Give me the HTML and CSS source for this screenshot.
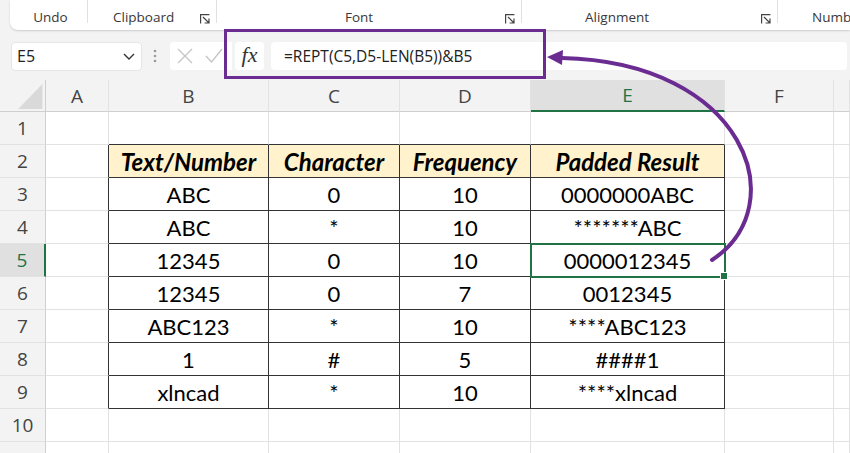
FILE: index.html
```html
<!DOCTYPE html>
<html>
<head>
<meta charset="utf-8">
<link rel="stylesheet" href="styles.css">
</head>
<body>
<div class="app">
  <div class="ribbon">
    <div class="grp g-undo"><span class="lbl">Undo</span></div>
    <div class="grp g-clip"><span class="lbl">Clipboard</span><svg class="launch" viewBox="0 0 10 10"><path d="M0.6 9.4V0.6H9.4M3 3L9 9M9 4.6V9H4.6"/></svg></div>
    <div class="grp g-font"><span class="lbl">Font</span><svg class="launch" viewBox="0 0 10 10"><path d="M0.6 9.4V0.6H9.4M3 3L9 9M9 4.6V9H4.6"/></svg></div>
    <div class="grp g-align"><span class="lbl">Alignment</span><svg class="launch" viewBox="0 0 10 10"><path d="M0.6 9.4V0.6H9.4M3 3L9 9M9 4.6V9H4.6"/></svg></div>
    <div class="grp g-num"><span class="lbl">Number</span></div>
  </div>

  <div class="fbar">
    <div class="namebox"><span>E5</span><svg class="chev" viewBox="0 0 12 7"><path d="M1 1L6 6L11 1"/></svg></div>
    <svg class="dots" viewBox="0 0 4 14"><circle cx="2" cy="2" r="1.3"/><circle cx="2" cy="7" r="1.3"/><circle cx="2" cy="12" r="1.3"/></svg>
    <div class="btnbox">
      <svg class="ico" viewBox="0 0 16 16"><path d="M1 1L15 15M15 1L1 15"/></svg>
      <svg class="ico" viewBox="0 0 18 16"><path d="M1 8L6.5 14L17 1"/></svg>
    </div>
    <div class="fxbox"><span class="fx">fx</span></div>
    <div class="formula">=REPT(C5,D5-LEN(B5))&amp;B5</div>
  </div>

  <div class="sheet">
    <div class="corner"><svg viewBox="0 0 46 32"><path d="M43 4V30H18Z"/></svg></div>
    <div class="ch">A</div><div class="ch">B</div><div class="ch">C</div><div class="ch">D</div><div class="ch ch-sel">E</div><div class="ch">F</div><div class="ch"></div>

    <div class="rh">1</div><div class="c"></div><div class="c tt"></div><div class="c tt"></div><div class="c tt"></div><div class="c tt"></div><div class="c"></div><div class="c"></div>

    <div class="rh">2</div><div class="c tl"></div><div class="c t h">Text/Number</div><div class="c t h">Character</div><div class="c t h">Frequency</div><div class="c t h">Padded Result</div><div class="c"></div><div class="c"></div>

    <div class="rh">3</div><div class="c tl"></div><div class="c t">ABC</div><div class="c t">0</div><div class="c t">10</div><div class="c t">0000000ABC</div><div class="c"></div><div class="c"></div>

    <div class="rh">4</div><div class="c tl"></div><div class="c t">ABC</div><div class="c t">*</div><div class="c t">10</div><div class="c t">*******ABC</div><div class="c"></div><div class="c"></div>

    <div class="rh rh-sel">5</div><div class="c tl"></div><div class="c t">12345</div><div class="c t">0</div><div class="c t">10</div><div class="c t sel">0000012345</div><div class="c"></div><div class="c"></div>

    <div class="rh">6</div><div class="c tl"></div><div class="c t">12345</div><div class="c t">0</div><div class="c t">7</div><div class="c t">0012345</div><div class="c"></div><div class="c"></div>

    <div class="rh">7</div><div class="c tl"></div><div class="c t">ABC123</div><div class="c t">*</div><div class="c t">10</div><div class="c t">****ABC123</div><div class="c"></div><div class="c"></div>

    <div class="rh">8</div><div class="c tl"></div><div class="c t">1</div><div class="c t">#</div><div class="c t">5</div><div class="c t">####1</div><div class="c"></div><div class="c"></div>

    <div class="rh">9</div><div class="c tl"></div><div class="c t">xlncad</div><div class="c t">*</div><div class="c t">10</div><div class="c t">****xlncad</div><div class="c"></div><div class="c"></div>

    <div class="rh">10</div><div class="c"></div><div class="c"></div><div class="c"></div><div class="c"></div><div class="c"></div><div class="c"></div><div class="c"></div>

    <div class="rh"></div><div class="c"></div><div class="c"></div><div class="c"></div><div class="c"></div><div class="c"></div><div class="c"></div><div class="c"></div>
  </div>

  <svg class="overlay" viewBox="0 0 850 453">
    <rect class="hl" x="225.5" y="30.5" width="319" height="47"/>
    <path class="arc" d="M712 260C795 205 745 62 562 58"/>
    <path class="head" d="M547 57L563 50L562 65Z"/>
  </svg>
</div>
</body>
</html>
```

FILE: styles.css
```css
* { box-sizing: border-box; }
html, body { margin: 0; padding: 0; }
body { background: #f3f3f3; }

.app {
  position: relative;
  width: 850px;
  height: 453px;
  overflow: hidden;
  background: #f3f3f3;
  font-family: "Open Sans", "Noto Sans", sans-serif;
}

/* Ribbon */
.ribbon {
  height: 30px;
  margin-left: 10px;
  background: #fff;
  border-bottom-left-radius: 8px;
  box-shadow: 0 1px 2px rgba(0, 0, 0, 0.16);
  display: flex;
  white-space: nowrap;
  overflow: hidden;
}
.grp {
  height: 23px;
  display: flex;
  align-items: flex-end;
  border-right: 1px solid #e0e0e0;
  flex: none;
}
.lbl {
  font-size: 13.5px;
  line-height: 18px;
  color: #383838;
  margin-bottom: -3px;
}
.g-undo { width: 78px; justify-content: center; padding-left: 4px; }
.g-clip { width: 129px; padding-left: 25px; }
.g-font { width: 305px; padding-left: 128px; }
.g-align { width: 256px; padding-left: 63px; }
.g-num { border-right: none; padding-left: 34px; }
.g-clip .lbl, .g-font .lbl, .g-align .lbl { flex: 1; }
.launch {
  width: 10px;
  height: 10px;
  margin: 0 6px -1px 0;
  fill: none;
  stroke: #444;
  stroke-width: 1.2;
}

/* Formula bar */
.fbar {
  height: 50px;
  display: flex;
  align-items: center;
  padding-top: 2px;
}
.namebox {
  margin-left: 11px;
  width: 131px;
  height: 29px;
  background: #fff;
  border-radius: 4px;
  border: 1px solid #e6e6e6;
  display: flex;
  align-items: center;
  justify-content: space-between;
  padding: 0 6px 0 5px;
  font-size: 16px;
  color: #222;
}
.chev {
  width: 12px;
  height: 7px;
  fill: none;
  stroke: #333;
  stroke-width: 1.4;
}
.dots {
  width: 4px;
  height: 14px;
  margin-left: 11px;
  fill: #9a9a9a;
}
.btnbox {
  margin-left: 13px;
  width: 62px;
  height: 28px;
  background: #fff;
  border-radius: 4px 0 0 4px;
  display: flex;
  align-items: center;
  gap: 12px;
  padding-left: 7px;
}
.ico {
  width: 16px;
  height: 16px;
  fill: none;
  stroke: #c4c4c4;
  stroke-width: 1.3;
}
.ico + .ico { width: 18px; }
.fxbox {
  margin-left: 3px;
  width: 29px;
  height: 28px;
  background: #fff;
  border-radius: 4px;
  display: flex;
  align-items: center;
  justify-content: center;
}
.fx {
  font-family: "Liberation Serif", "DejaVu Serif", serif;
  font-style: italic;
  font-size: 22px;
  color: #333;
  line-height: 1;
  margin-top: -3px;
}
.formula {
  margin-left: 7px;
  width: 576px;
  height: 28px;
  background: #fff;
  border-radius: 4px;
  font-size: 15.5px;
  color: #222;
  display: flex;
  align-items: center;
  padding-left: 13px;
}

/* Sheet */
.sheet {
  display: grid;
  grid-template-columns: 46px 63px 160px 131px 131px 194px 109px 16px;
  grid-template-rows: 32px repeat(11, 33px);
  background: #fff;
}
.corner, .ch {
  background: #f3f3f3;
  border-bottom: 1px solid #cfcfcf;
  border-right: 1px solid #e2e2e2;
}
.corner { border-right-color: #cfcfcf; }
.corner svg { display: block; width: 46px; height: 31px; fill: #d9d9d9; }
.ch {
  display: flex;
  align-items: center;
  justify-content: center;
  font-size: 19px;
  color: #444;
}
.ch-sel {
  background: #e0e0e0;
  color: #217346;
  border-bottom: 2px solid #217346;
}
.rh {
  background: #f3f3f3;
  border-right: 1px solid #cfcfcf;
  border-bottom: 1px solid #e2e2e2;
  display: flex;
  align-items: center;
  justify-content: center;
  font-size: 19px;
  color: #444;
}
.rh-sel {
  background: #e0e0e0;
  color: #217346;
  border-right: 2px solid #217346;
}
.c {
  border-right: 1px solid #e2e2e2;
  border-bottom: 1px solid #e2e2e2;
  display: flex;
  align-items: center;
  justify-content: center;
  font-family: Lato, "Open Sans", sans-serif;
  font-size: 22px;
  color: #000;
  white-space: nowrap;
}
.tt { border-bottom-color: #333; }
.tl { border-right-color: #333; }
.t {
  border-right-color: #333;
  border-bottom-color: #333;
}
.h {
  background: #fff2cc;
  font-weight: 700;
  font-style: italic;
  font-size: 24px;
}
.sel {
  position: relative;
  outline: 2px solid #217346;
  outline-offset: -1px;
}
.sel::after {
  content: "";
  position: absolute;
  right: -4px;
  bottom: -4px;
  width: 6px;
  height: 6px;
  background: #217346;
  border: 1px solid #fff;
  z-index: 2;
}

/* Annotation overlay */
.overlay {
  position: absolute;
  left: 0;
  top: 0;
  width: 850px;
  height: 453px;
  pointer-events: none;
  z-index: 5;
}
.hl {
  fill: none;
  stroke: #6b2c91;
  stroke-width: 3;
}
.arc {
  fill: none;
  stroke: #6b2c91;
  stroke-width: 4;
  stroke-linecap: round;
}
.head { fill: #6b2c91; }
```
